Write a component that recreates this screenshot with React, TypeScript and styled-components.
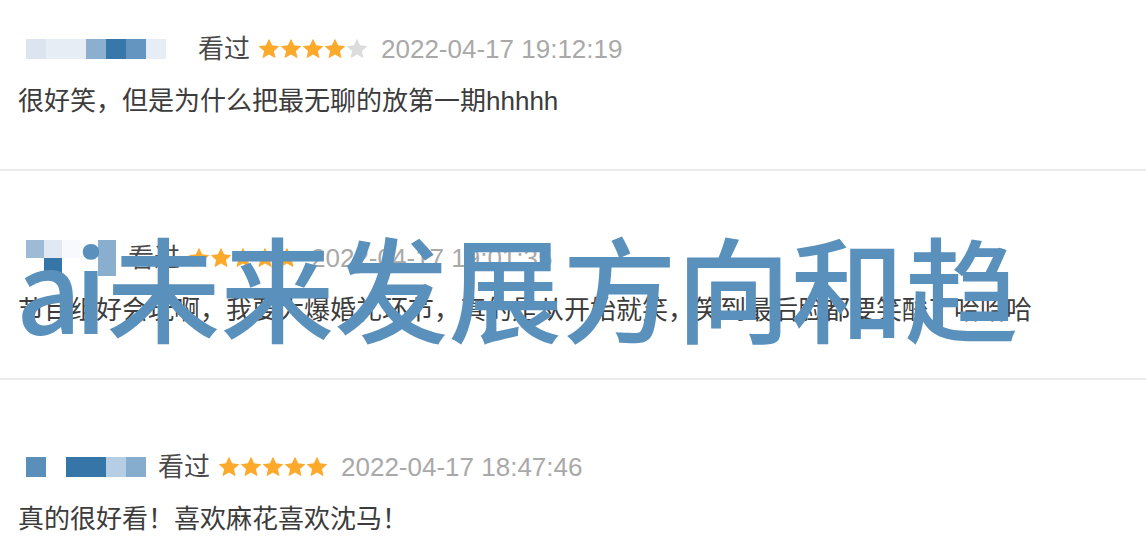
import React from 'react'
import styled, { createGlobalStyle } from 'styled-components'

const GlobalStyle = createGlobalStyle`
  html, body {
    margin: 0;
    padding: 0;
    background: #fff;
  }
  body {
    font-family: "Liberation Sans", "Noto Sans CJK SC", sans-serif;
  }
`

const Page = styled.div`
  position: relative;
  width: 1146px;
  height: 556px;
  overflow: hidden;
  background: #fff;
`

const List = styled.div`
  display: flex;
  flex-direction: column;
  margin-top: -38px;
`

const Item = styled.div`
  display: flex;
  flex-direction: column;
  gap: 16px;
  padding: 68px 18px 50px;
  border-bottom: 2px solid #ebebeb;
`

const Header = styled.div`
  display: flex;
  align-items: center;
  height: 37px;
  font-size: 26px;
  line-height: 30px;
`

const Mosaic = styled.div<{ $cols: number; $cell: number }>`
  display: grid;
  grid-template-columns: repeat(${p => p.$cols}, ${p => p.$cell}px);
  grid-auto-rows: ${p => p.$cell}px;
  margin-left: 8px;
  margin-right: 12px;
`

const Cell = styled.div<{ $color: string }>`
  background: ${p => p.$color};
`

const Status = styled.span`
  color: #494949;
  margin-right: 8px;
`

const Stars = styled.div`
  display: flex;
  margin-right: 13px;
`

const DateText = styled.span`
  color: #a9a9a9;
`

const Comment = styled.div`
  font-size: 26px;
  line-height: 36px;
  color: #3c3c3c;
  white-space: nowrap;
`

const Watermark = styled.div`
  position: absolute;
  left: 16px;
  top: 228px;
  font-family: "Noto Sans CJK SC", sans-serif;
  font-weight: 500;
  font-size: 114px;
  line-height: 1;
  color: #5a91bc;
  white-space: nowrap;
  pointer-events: none;
`

const Latin = styled.span`
  letter-spacing: -7px;
  margin-right: 6px;
`

const Star = ({ on }: { on: boolean }) => (
  <svg width="22" height="22" viewBox="0 0 24 24">
    <path
      d="M12 0.8l3.4 7.2 7.9.9-5.9 5.4 1.7 7.8L12 18.1l-7.1 4 1.7-7.8L.7 8.9l7.9-.9z"
      fill={on ? '#fda92c' : '#dcdcdc'}
    />
  </svg>
)

type Review = {
  cols: number
  cell: number
  cells: string[]
  rating: number
  date: string
  text: string
}

const reviews: Review[] = [
  {
    cols: 8,
    cell: 20,
    cells: ['#dce5ef', '#e6edf5', '#e6edf5', '#8aafcf', '#3777a9', '#6495c0', '#e6edf6', '#fff'],
    rating: 4,
    date: '2022-04-17 19:12:19',
    text: '很好笑，但是为什么把最无聊的放第一期hhhhh',
  },
  {
    cols: 5,
    cell: 18,
    cells: [
      '#9dbad6', '#e0e8f1', '#f7f9fc', '#fff', '#8aafce',
      '#fff', '#3575a8', '#fff', '#fff', '#8aafce',
    ],
    rating: 5,
    date: '2022-04-17 19:01:35',
    text: '节目组好会玩啊，我要大爆婚礼环节，真的是从开始就笑，笑到最后脸都要笑酸了哈哈哈',
  },
  {
    cols: 6,
    cell: 20,
    cells: ['#5a8fba', '#fff', '#3575a8', '#3575a8', '#b6cee3', '#86acce'],
    rating: 5,
    date: '2022-04-17 18:47:46',
    text: '真的很好看！喜欢麻花喜欢沈马！',
  },
]

export default function App() {
  return (
    <Page>
      <GlobalStyle />
      <List>
        {reviews.map((r, i) => (
          <Item key={i}>
            <Header>
              <Mosaic $cols={r.cols} $cell={r.cell}>
                {r.cells.map((c, j) => (
                  <Cell key={j} $color={c} />
                ))}
              </Mosaic>
              <Status>看过</Status>
              <Stars>
                {[0, 1, 2, 3, 4].map(n => (
                  <Star key={n} on={n < r.rating} />
                ))}
              </Stars>
              <DateText>{r.date}</DateText>
            </Header>
            <Comment>{r.text}</Comment>
          </Item>
        ))}
      </List>
      <Watermark>
        <Latin>ai</Latin>未来发展方向和趋
      </Watermark>
    </Page>
  )
}
